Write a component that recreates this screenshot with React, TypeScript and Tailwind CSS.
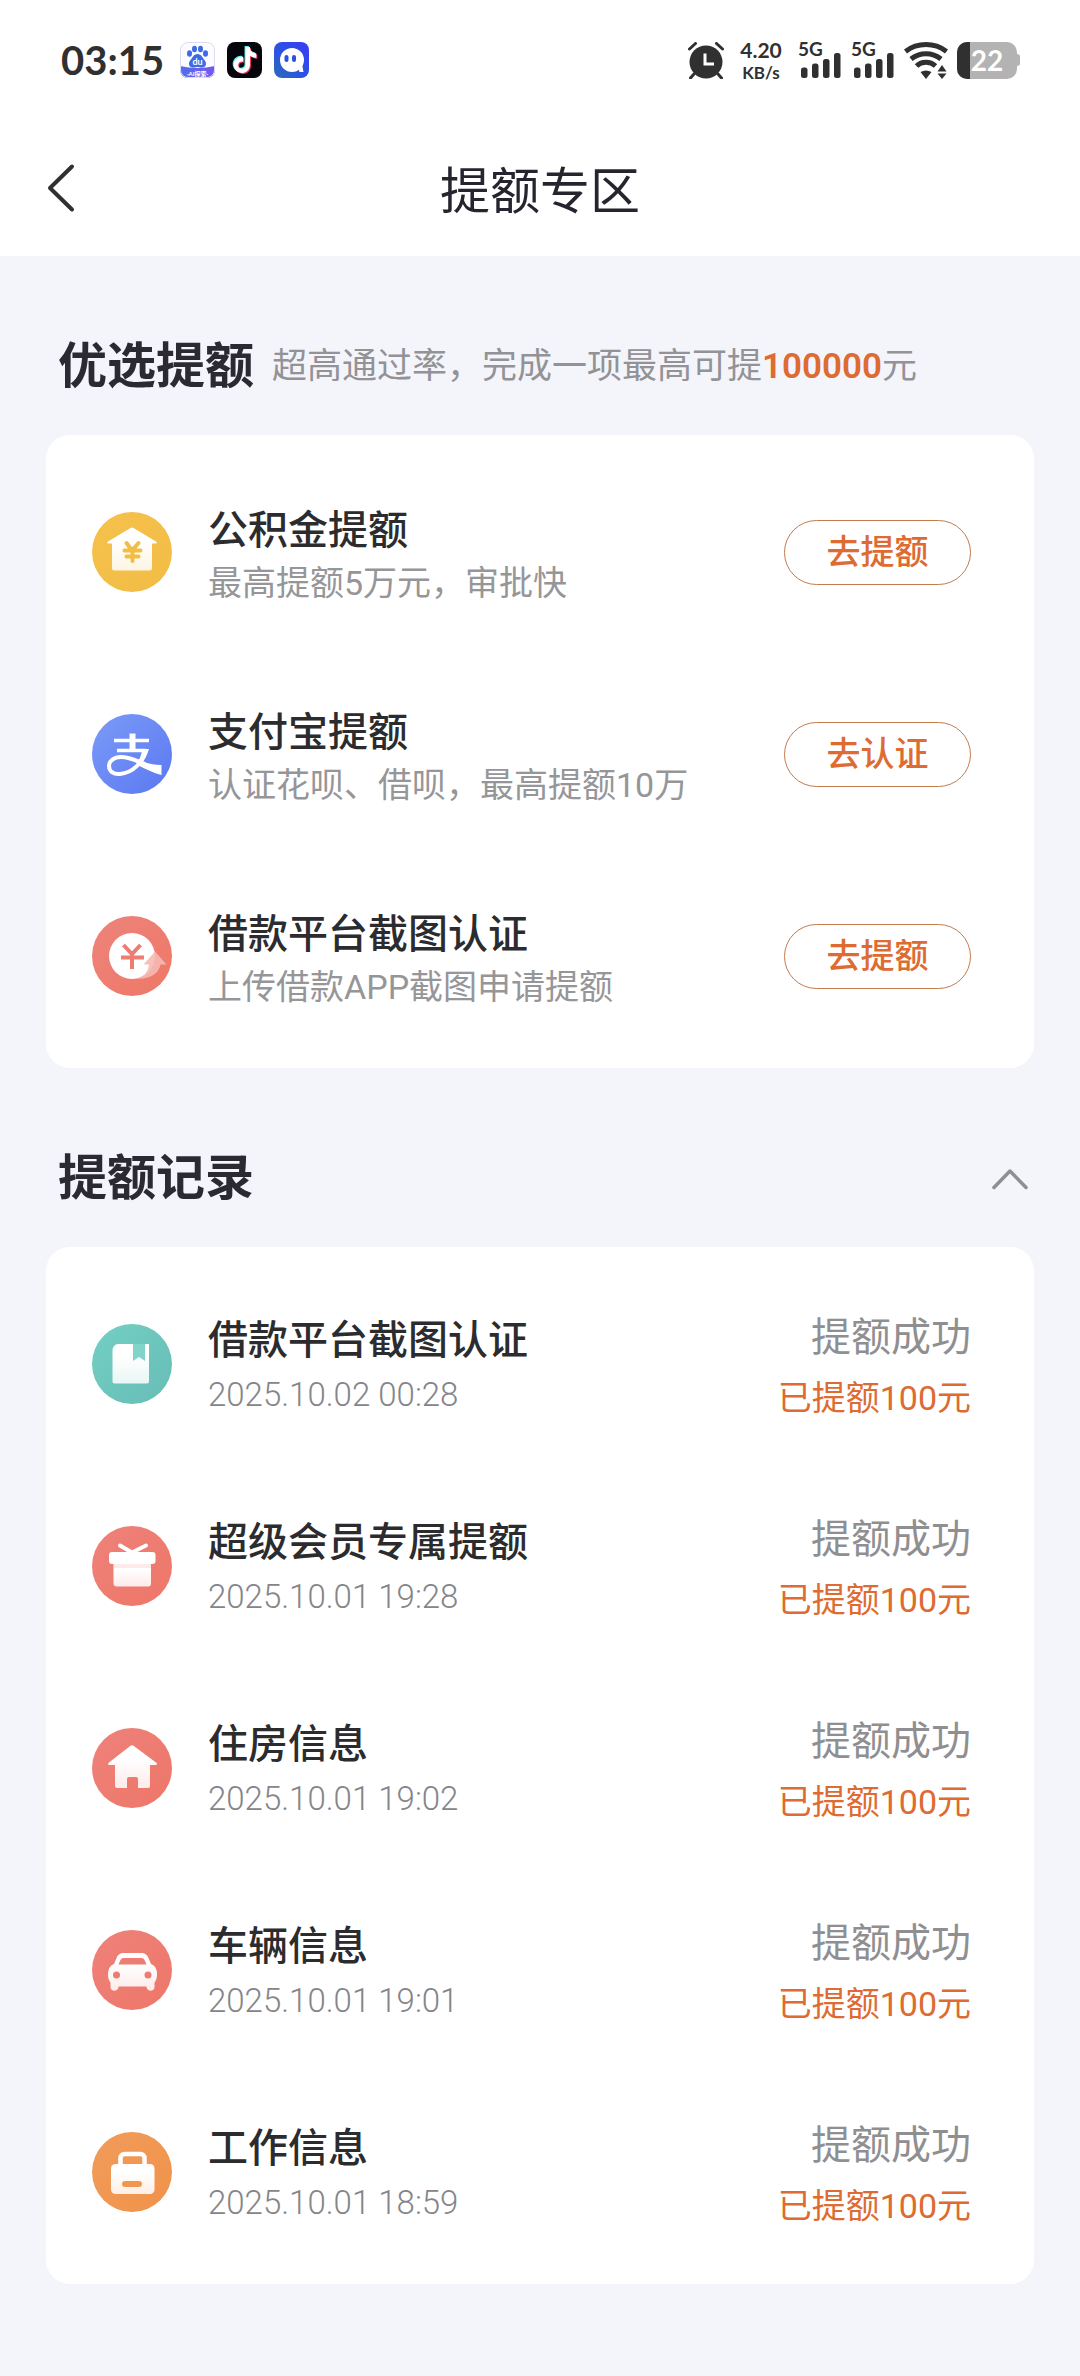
import React, { useState } from 'react';
import { SiTiktok } from 'react-icons/si';

type Offer = { title: string; desc: string; action: string; icon: React.ReactNode };
type LimitRecord = { title: string; time: string; amount: number; icon: React.ReactNode };

// --- ROUND ICONS (80x80 grid) ---

function RoundIcon({ id, from, to, children }: { id: string; from: string; to: string; children: React.ReactNode }) {
  return (
    <svg viewBox="0 0 80 80" className="size-20 shrink-0" aria-hidden="true">
      <defs>
        <linearGradient id={`${id}-bg`} x1="0" y1="0" x2="1" y2="1">
          <stop offset="0" stopColor={from} />
          <stop offset="1" stopColor={to} />
        </linearGradient>
        <linearGradient id={`${id}-fg`} x1="0" y1="0" x2="0" y2="1">
          <stop offset="0.3" stopColor="#ffffff" />
          <stop offset="1" stopColor="#ffffff" stopOpacity="0.85" />
        </linearGradient>
      </defs>
      <circle cx="40" cy="40" r="40" fill={`url(#${id}-bg)`} />
      {children}
    </svg>
  );
}

function FundIcon() {
  return (
    <RoundIcon id="fund" from="#f5c14c" to="#f2bd45">
      <path d="M38.5 16a3 3 0 0 1 3 0L64 29.500c1.500 1 1 2-.5 2H60V56a2.500 2.500 0 0 1-2.500 2.500h-35A2.500 2.500 0 0 1 20 56V31.500h-3.500c-1.500 0-2-1-.5-2Z" fill="url(#fund-fg)" />
      <path d="M34.500 31 40 38.500 46.500 31M32.500 38.500h16M34.500 44.500h12M40.500 38.500V49" fill="none" stroke="#f2bd45" strokeWidth="4" strokeLinecap="round" />
    </RoundIcon>
  );
}

function AlipayIcon() {
  return (
    <RoundIcon id="alipay" from="#7c9bf8" to="#5a78f0">
      <path d="M22 26.500h35M25 36.500h29" stroke="#fff" strokeWidth="3.500" />
      <path d="M37.500 19.500h6V37h-6Z" fill="#fff" />
      <path d="M54 36C51 48 41 59 28 60c-7 .5-11-3-11-8 0-5 5-9 12-9 9 0 16 4 24 7" fill="none" stroke="#fff" strokeWidth="4" />
      <path d="M46 46c8 3 15 5 23.500 5v10c-8-2-16-6-24-10Z" fill="#fff" />
      <path d="M50.500 35h6.500c-2 6-4 10-6.500 13l-4-1.500c2-3 3-7 4-11.500Z" fill="#fff" />
    </RoundIcon>
  );
}

function ScreenshotIcon() {
  return (
    <RoundIcon id="shot" from="#ed837c" to="#ef7866">
      <circle cx="40" cy="40" r="23" fill="#fff" />
      <path d="m31.500 29 8.500 9 8.500-9M29 41.500h23M40 38v15" fill="none" stroke="#ed7c72" strokeWidth="4" />
      <path d="M63 35.500 74.500 48.500H68.500C67 57 58 64 44 62.500c8-1.500 12-6 13-14h-5.500Z" fill="#f6b9b3" fillOpacity="0.9" />
    </RoundIcon>
  );
}

function BookIcon() {
  return (
    <RoundIcon id="book" from="#74cfc2" to="#66bdb7">
      <path d="M26 20h31v37.500a2 2 0 0 1-2 2H22.500a2 2 0 0 1-2-2V26a6 6 0 0 1 5.500-6Z" fill="url(#book-fg)" />
      <path d="M41 20h12v17l-6-4-6 4Z" fill="#7fd5ca" />
    </RoundIcon>
  );
}

function GiftIcon() {
  return (
    <RoundIcon id="gift" from="#ee827b" to="#ee7668">
      <path d="m28 19.500 12 7 14-7" fill="none" stroke="#fff" strokeWidth="4" strokeLinecap="round" strokeLinejoin="round" />
      <rect x="21.500" y="36" width="37.500" height="24.500" rx="3" fill="url(#gift-fg)" />
      <path d="M21.500 38H59v4H21.500Z" fill="#f8cdc9" fillOpacity="0.4" />
      <rect x="17" y="26" width="46.500" height="12" rx="3" fill="#fff" />
    </RoundIcon>
  );
}

function HouseIcon() {
  return (
    <RoundIcon id="house" from="#ee827b" to="#ee7668">
      <path d="M38.500 17.800a3 3 0 0 1 3 0L64 34.500c1.500 1.200 1 2.500-.5 2.500H58v21a2 2 0 0 1-2 2H46v-9a2 2 0 0 0-2-2h-7a2 2 0 0 0-2 2v9H25a2 2 0 0 1-2-2V37h-5.500c-1.500 0-2-1.300-.5-2.500Z" fill="url(#house-fg)" />
    </RoundIcon>
  );
}

function CarIcon() {
  return (
    <RoundIcon id="car" from="#ee827b" to="#ee7668">
      <path
        fillRule="evenodd"
        d="M32 23h17c4 0 6 1.500 7.500 5l2.500 6c4 1.500 6 5 6 10.500 0 4-1 6-2.500 8V57c0 5-7.500 5-8 0v-.5h-28V57c-.5 5-8 5-8 0v-4.500C17 50.500 16 48.500 16 44.500 16 39 18 35.500 22 34l2.500-6c1.500-3.500 3.500-5 7.500-5Zm1 5c-3 0-4 .5-5 3l-1.500 3.500h28L53 31c-1-2.500-2-3-5-3Z"
        fill="url(#car-fg)"
      />
      <circle cx="24.500" cy="45" r="3.500" fill="#ee7c72" />
      <circle cx="56" cy="45" r="3.500" fill="#ee7c72" />
    </RoundIcon>
  );
}

function BagIcon() {
  return (
    <RoundIcon id="bag" from="#f19b5a" to="#f0934a">
      <path d="M28.500 34v-8a4 4 0 0 1 4-4h16a4 4 0 0 1 4 4v8" fill="none" stroke="#fff" strokeWidth="4.500" />
      <rect x="19" y="32" width="43.500" height="30" rx="4.500" fill="url(#bag-fg)" />
      <rect x="30" y="49" width="20" height="6" rx="3" fill="#f1964f" />
    </RoundIcon>
  );
}

const OFFERS: Offer[] = [
  { title: '公积金提额', desc: '最高提额5万元，审批快', action: '去提额', icon: <FundIcon /> },
  { title: '支付宝提额', desc: '认证花呗、借呗，最高提额10万', action: '去认证', icon: <AlipayIcon /> },
  { title: '借款平台截图认证', desc: '上传借款APP截图申请提额', action: '去提额', icon: <ScreenshotIcon /> },
];

const RECORDS: LimitRecord[] = [
  { title: '借款平台截图认证', time: '2025.10.02 00:28', amount: 100, icon: <BookIcon /> },
  { title: '超级会员专属提额', time: '2025.10.01 19:28', amount: 100, icon: <GiftIcon /> },
  { title: '住房信息', time: '2025.10.01 19:02', amount: 100, icon: <HouseIcon /> },
  { title: '车辆信息', time: '2025.10.01 19:01', amount: 100, icon: <CarIcon /> },
  { title: '工作信息', time: '2025.10.01 18:59', amount: 100, icon: <BagIcon /> },
];

// --- STATUS BAR ---

function Signal() {
  return (
    <div className="flex h-9 w-11 flex-col justify-between">
      <span className="text-[19px] leading-[14px] font-bold">5G</span>
      <svg viewBox="0 0 44 25" className="-mt-1 h-[25px] w-11" fill="currentColor" aria-hidden="true">
        <rect x="3" y="14.500" width="6.500" height="10.500" rx="2.500" />
        <rect x="14" y="10.500" width="6.500" height="14.500" rx="2.500" />
        <rect x="25" y="6" width="6.500" height="19" rx="2.500" />
        <rect x="36" y="0" width="6.500" height="25" rx="2.500" />
      </svg>
    </div>
  );
}

function StatusBar() {
  return (
    <div className="flex h-[120px] items-center justify-between pr-[60px] pl-[61px] font-['Lato','Noto_Sans_CJK_SC',sans-serif] text-[#303030]">
      <div className="flex items-center gap-3">
        <span className="mr-1 text-[40px] leading-9 font-bold">03:15</span>
        <svg viewBox="0 0 35 36" className="h-9 w-[35px]" aria-hidden="true">
          <defs>
            <linearGradient id="baidu" x1="0" y1="0" x2="1" y2="0">
              <stop offset="0" stopColor="#4f6ff0" />
              <stop offset="1" stopColor="#7a55ee" />
            </linearGradient>
            <clipPath id="baidu-clip">
              <rect width="35" height="36" rx="8" />
            </clipPath>
          </defs>
          <g clipPath="url(#baidu-clip)">
            <rect width="35" height="36" fill="#fcfcff" />
            <path d="M0 24q17.500 4 35 0v12H0Z" fill="url(#baidu)" />
          </g>
          <rect x="0.500" y="0.500" width="34" height="35" rx="7.500" fill="none" stroke="#d9dcf3" />
          <g fill="#3d6be6">
            <ellipse cx="9.500" cy="11.500" rx="2.500" ry="3.200" />
            <ellipse cx="14.500" cy="7" rx="2.500" ry="3.300" />
            <ellipse cx="20.500" cy="7" rx="2.500" ry="3.300" />
            <ellipse cx="25.500" cy="11.500" rx="2.500" ry="3.200" />
            <path d="M17.500 12c4 0 5 4 7 6s2.500 7-2 7.500c-2 .2-3-.5-5-.5s-3 .7-5 .5c-4.500-.5-4-5.500-2-7.500s3-6 7-6Z" />
          </g>
          <text x="17.500" y="23" textAnchor="middle" fontSize="9" fontWeight="700" fill="#fff">du</text>
          <text x="17.500" y="33.500" textAnchor="middle" fontSize="6" fontWeight="700" fill="#fff">·AI探索·</text>
        </svg>
        <div className="relative flex h-9 w-[35px] items-center justify-center rounded-lg bg-[#05060c]">
          <SiTiktok className="absolute top-1 left-1 size-[26px] text-[#5ff0ea]" />
          <SiTiktok className="absolute top-1.5 left-1.5 size-[26px] text-[#f0365c]" />
          <SiTiktok className="absolute top-[5px] left-[5px] size-[26px] text-white" />
        </div>
        <svg viewBox="0 0 35 36" className="h-9 w-[35px]" aria-hidden="true">
          <defs>
            <linearGradient id="chat" x1="0" y1="1" x2="1" y2="0">
              <stop offset="0" stopColor="#2a6bb8" />
              <stop offset="0.500" stopColor="#2b50e6" />
              <stop offset="1" stopColor="#3a3cf2" />
            </linearGradient>
          </defs>
          <rect width="35" height="36" rx="8" fill="url(#chat)" />
          <circle cx="18" cy="18" r="12" fill="#fff" />
          <path d="m24 25 4-3 1.500 8h-4Z" fill="#fff" />
          <rect x="10.500" y="13" width="4" height="7" rx="2" fill="#2b50e6" />
          <rect x="18" y="13" width="4" height="7" rx="2" fill="#2b50e6" />
        </svg>
      </div>

      <div className="flex items-center gap-[9px]">
        <svg viewBox="0 0 36 37" className="mr-1.5 h-[37px] w-9" aria-hidden="true">
          <circle cx="18" cy="20" r="16.500" fill="#303030" />
          <path d="m1.500 7 6-5.500M34.500 7l-6-5.500M6 32l-3.500 4M30 32l3.500 4" stroke="#303030" strokeWidth="3" strokeLinecap="round" />
          <path d="M17 11.500V22h9" fill="none" stroke="#fff" strokeWidth="3" />
        </svg>
        <div className="mr-1.5 flex w-11 flex-col items-center font-bold">
          <span className="text-[21px] leading-[25px]">4.20</span>
          <span className="text-[17px] leading-[21px]">KB/s</span>
        </div>
        <Signal />
        <Signal />
        <svg viewBox="0 0 44 37" className="h-[37px] w-11" aria-hidden="true">
          <g fill="none" stroke="#303030" strokeWidth="5">
            <path d="M1.500 9.500a34 34 0 0 1 41 0" />
            <path d="M7 17a24 24 0 0 1 30 0" />
            <path d="M12.500 24a14 14 0 0 1 19 0" />
          </g>
          <path d="M16.500 30q5.500-3 11 0L22 37ZM33.500 29.500 38 23l4.500 6.500ZM33.500 31.500H42.500L38 37Z" fill="#303030" />
        </svg>
        <div className="flex items-center">
          <div className="relative flex h-[37px] w-[60px] items-center justify-center overflow-hidden rounded-[10px] bg-[#b3b3b3]">
            <div className="absolute inset-y-0 left-0 w-[13px] bg-[#303030]" />
            <span className="relative text-[28px] font-bold text-white">22</span>
          </div>
          <div className="h-3 w-[3px] rounded-r-sm bg-[#b3b3b3]" />
        </div>
      </div>
    </div>
  );
}

function Row({ icon, children }: { icon: React.ReactNode; children: React.ReactNode }) {
  return (
    <li className="flex h-[202px] items-center gap-9">
      {icon}
      {children}
    </li>
  );
}

export default function App() {
  const [open, setOpen] = useState(true);

  return (
    <div className="min-h-screen bg-[#f4f5fa] font-['Roboto','Noto_Sans_CJK_SC',sans-serif] text-[#2c2c2e]">
      <header className="bg-white">
        <StatusBar />
        <div className="grid h-[136px] grid-cols-[1fr_auto_1fr] items-center px-[46px]">
          <button type="button" aria-label="返回" className="justify-self-start">
            <svg viewBox="0 0 30 50" className="h-[50px] w-[30px]" aria-hidden="true">
              <path d="M26 3.500 4 25l22 21.500" fill="none" stroke="#303030" strokeWidth="4" strokeLinecap="round" strokeLinejoin="round" />
            </svg>
          </button>
          <h1 className="pt-2 text-[50px] leading-[64px] text-[#26242e]">提额专区</h1>
        </div>
      </header>

      <main className="px-[46px] pb-[92px]">
        <section>
          <div className="flex items-center gap-[18px] px-3 pt-[79px] pb-9">
            <h2 className="text-[49px] leading-[64px] font-bold text-[#2b2a33]">优选提额</h2>
            <p className="text-[35px] text-[#929297]">
              超高通过率，完成一项最高可提<b className="font-semibold text-[#dd6b32]">100000</b>元
            </p>
          </div>

          <ul className="rounded-3xl bg-white pt-4 pr-[63px] pb-[11px] pl-[46px]">
            {OFFERS.map((offer) => (
              <Row key={offer.title} icon={offer.icon}>
                <div className="flex-1 pt-2">
                  <h3 className="text-[40px] leading-[54px] font-medium">{offer.title}</h3>
                  <p className="text-[34px] leading-[50px] text-[#969699]">{offer.desc}</p>
                </div>
                <button
                  type="button"
                  className="h-[65px] w-[187px] rounded-full border border-[#c57a4c] text-[34px] font-medium text-[#dd6b32]"
                >
                  {offer.action}
                </button>
              </Row>
            ))}
          </ul>
        </section>

        <section>
          <div className="flex items-center justify-between pt-[79px] pr-1.5 pb-9 pl-3">
            <h2 className="text-[49px] leading-[64px] font-bold text-[#2b2a33]">提额记录</h2>
            <button type="button" aria-label="展开或收起" aria-expanded={open} onClick={() => setOpen(!open)}>
              <svg viewBox="0 0 36 22" className="h-[22px] w-9" aria-hidden="true">
                <path d="M2 19.500 18 3l16 16.500" fill="none" stroke="#8f8f92" strokeWidth="3.500" strokeLinecap="round" strokeLinejoin="round" />
              </svg>
            </button>
          </div>

          {open && (
            <ul className="rounded-3xl bg-white pt-4 pr-[63px] pb-[11px] pl-[46px]">
              {RECORDS.map((record) => (
                <Row key={record.title} icon={record.icon}>
                  <div className="flex-1 pt-2">
                    <h3 className="text-[40px] leading-[54px] font-medium">{record.title}</h3>
                    <time className="block text-[33px] leading-[54px] font-light text-[#858589]">{record.time}</time>
                  </div>
                  <div className="pt-2 text-right">
                    <p className="text-[40px] leading-[60px] text-[#8f8f92]">提额成功</p>
                    <p className="text-[34px] leading-[60px] text-[#dd6b32]">已提额{record.amount}元</p>
                  </div>
                </Row>
              ))}
            </ul>
          )}
        </section>
      </main>
    </div>
  );
}
